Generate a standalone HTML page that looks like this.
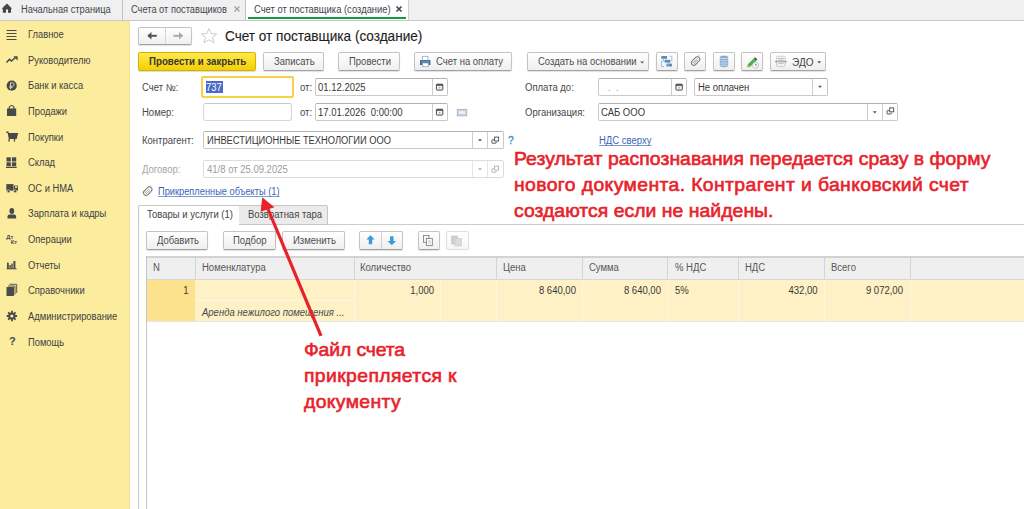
<!DOCTYPE html>
<html><head><meta charset="utf-8">
<style>
*{box-sizing:border-box;margin:0;padding:0}
html,body{width:1024px;height:509px;overflow:hidden;background:#fff}
body{position:relative;font-family:"Liberation Sans",sans-serif;color:#4d4d4d;font-size:10px}
.a{position:absolute}
.t{position:absolute;white-space:nowrap}
.btn{position:absolute;border:1px solid #c4c4c4;border-bottom-color:#a2a2a2;border-radius:2px;background:linear-gradient(#ffffff,#efefef);box-shadow:0 1px 1px rgba(0,0,0,.12)}
.inp{position:absolute;border:1px solid #c8c8c8;border-top-color:#b0b0b0;border-radius:2px;background:#fff}
.ico{position:absolute;overflow:visible}
.red{position:absolute;white-space:nowrap;color:#e8222b;font-weight:normal;font-size:18px;-webkit-text-stroke:0.6px #e8222b}
.lnk{color:#3d64b8;text-decoration:underline;text-decoration-color:#7d9bd6;text-decoration-skip-ink:none}
</style></head><body>
<div class="a" style="left:0px;top:0px;width:1024px;height:20px;background:#f0f0f0;"></div>
<div class="a" style="left:0px;top:20px;width:1024px;height:1px;background:#c8c8ce;"></div>
<svg class="ico" style="left:0;top:0" width="14" height="14" viewBox="0 0 14 14"><path d="M6.9 3.6 L1.6 8.7 L2.8 8.7 L2.8 12.8 L6 12.8 L6 9.4 L8 9.4 L8 12.8 L11 12.8 L11 8.7 L12.2 8.7 Z" fill="#454545"/></svg>
<div class="t" style="left:20.80px;top:4.73px;font-size:10.0px;line-height:10.0px;transform-origin:0 0;transform:scaleX(0.9262499999999999);color:#45454f;">Начальная страница</div>
<div class="a" style="left:122px;top:0px;width:1px;height:20px;background:#c2c2c2;"></div>
<div class="t" style="left:131.00px;top:4.73px;font-size:10.0px;line-height:10.0px;transform-origin:0 0;transform:scaleX(0.9262499999999999);color:#45454f;">Счета от поставщиков</div>
<svg class="ico" style="left:233px;top:5px" width="8" height="8" viewBox="0 0 8 8"><path d="M1.5 1.5 L6.5 6.5 M6.5 1.5 L1.5 6.5" stroke="#a0a0a0" stroke-width="1.2"/></svg>
<div class="a" style="left:245px;top:0px;width:1px;height:20px;background:#c2c2c2;"></div>
<div class="a" style="left:246px;top:0px;width:162px;height:20px;background:#ffffff;"></div>
<div class="a" style="left:248px;top:17px;width:158px;height:2px;background:#139a43;"></div>
<div class="t" style="left:253.50px;top:4.73px;font-size:10.0px;line-height:10.0px;transform-origin:0 0;transform:scaleX(0.9405);color:#45454f;">Счет от поставщика (создание)</div>
<svg class="ico" style="left:395px;top:5px" width="8" height="8" viewBox="0 0 8 8"><path d="M1.5 1.5 L6.5 6.5 M6.5 1.5 L1.5 6.5" stroke="#444" stroke-width="1.6"/></svg>
<div class="a" style="left:408px;top:0px;width:1px;height:20px;background:#cfcfcf;"></div>
<div class="a" style="left:0px;top:21px;width:130px;height:488px;background:#fbec9e;"></div>
<div class="a" style="left:129px;top:21px;width:1px;height:488px;background:#f3e394;"></div>
<div class="t" style="left:27.80px;top:30.14px;font-size:10.0px;line-height:10.0px;transform-origin:0 0;transform:scaleX(0.93575);color:#424242;">Главное</div>
<div class="t" style="left:27.80px;top:55.75px;font-size:10.0px;line-height:10.0px;transform-origin:0 0;transform:scaleX(0.93575);color:#424242;">Руководителю</div>
<div class="t" style="left:27.80px;top:81.38px;font-size:10.0px;line-height:10.0px;transform-origin:0 0;transform:scaleX(0.93575);color:#424242;">Банк и касса</div>
<div class="t" style="left:27.80px;top:106.99px;font-size:10.0px;line-height:10.0px;transform-origin:0 0;transform:scaleX(0.93575);color:#424242;">Продажи</div>
<div class="t" style="left:27.80px;top:132.62px;font-size:10.0px;line-height:10.0px;transform-origin:0 0;transform:scaleX(0.93575);color:#424242;">Покупки</div>
<div class="t" style="left:27.80px;top:158.23px;font-size:10.0px;line-height:10.0px;transform-origin:0 0;transform:scaleX(0.93575);color:#424242;">Склад</div>
<div class="t" style="left:27.80px;top:183.85px;font-size:10.0px;line-height:10.0px;transform-origin:0 0;transform:scaleX(0.93575);color:#424242;">ОС и НМА</div>
<div class="t" style="left:27.80px;top:209.47px;font-size:10.0px;line-height:10.0px;transform-origin:0 0;transform:scaleX(0.93575);color:#424242;">Зарплата и кадры</div>
<div class="t" style="left:27.80px;top:235.09px;font-size:10.0px;line-height:10.0px;transform-origin:0 0;transform:scaleX(0.93575);color:#424242;">Операции</div>
<div class="t" style="left:27.80px;top:260.72px;font-size:10.0px;line-height:10.0px;transform-origin:0 0;transform:scaleX(0.93575);color:#424242;">Отчеты</div>
<div class="t" style="left:27.80px;top:286.34px;font-size:10.0px;line-height:10.0px;transform-origin:0 0;transform:scaleX(0.93575);color:#424242;">Справочники</div>
<div class="t" style="left:27.80px;top:311.96px;font-size:10.0px;line-height:10.0px;transform-origin:0 0;transform:scaleX(0.93575);color:#424242;">Администрирование</div>
<div class="t" style="left:27.80px;top:337.58px;font-size:10.0px;line-height:10.0px;transform-origin:0 0;transform:scaleX(0.93575);color:#424242;">Помощь</div>
<svg class="ico" style="left:0;top:0" width="130" height="509" fill="#4a4a4a"><rect x="6.5" y="30" width="10" height="1" /><rect x="6.5" y="33" width="10" height="1"/><rect x="6.5" y="36" width="10" height="1"/><rect x="6.5" y="39" width="10" height="1"/><path d="M6.5 62.5 L9.5 59.3 L11.5 61 L15.5 57.5" fill="none" stroke-width="1.6" stroke="#4a4a4a"/><path d="M13.3 56.3 L17.6 56.3 L17.6 60.6 Z"/><circle cx="11.7" cy="85.7" r="5.1"/><path d="M10.5 89.2 L10.5 82.8 L12.4 82.8 Q14.1 82.8 14.1 84.5 Q14.1 86.2 12.4 86.2 L9.4 86.2 M9.4 87.6 L12.6 87.6" fill="none" stroke="#d8d0a8" stroke-width="1"/><path d="M7 108.5 L16.2 108.5 L16.2 116 L7 116 Z"/><path d="M9.3 109 L9.3 107 Q11.6 104 13.9 107 L13.9 109" fill="none" stroke="#4a4a4a" stroke-width="1.2"/><path d="M6 132 L8 132 L9.3 138.4 L16.2 138.4 L17.5 133.6 L8.6 133.6" fill="#4a4a4a" stroke="#4a4a4a" stroke-width="1.1"/><rect x="8.4" y="139" width="1.3" height="2.6"/><rect x="13.8" y="139" width="1.3" height="2.6"/><rect x="6.5" y="157.3" width="4.3" height="4.2"/><rect x="11.9" y="157.3" width="4.3" height="4.2"/><rect x="6.5" y="162.3" width="4.3" height="3.8"/><rect x="11.9" y="162.3" width="4.3" height="3.8"/><rect x="6" y="166.7" width="10.7" height="1.3"/><rect x="6.3" y="184.1" width="7.2" height="6.6"/><rect x="13.9" y="185.6" width="4.1" height="5.1"/><rect x="15" y="186.3" width="2.2" height="1.6" fill="#fbec9e"/><circle cx="8.5" cy="191.2" r="1.5" stroke="#fbec9e" stroke-width="0.6"/><circle cx="15.2" cy="191.2" r="1.5" stroke="#fbec9e" stroke-width="0.6"/><ellipse cx="11.8" cy="211" rx="2.4" ry="2.9"/><path d="M7.5 218.6 L7.5 216.6 Q7.5 214.6 9.5 214.6 L14.1 214.6 Q16.1 214.6 16.1 216.6 L16.1 218.6 Z"/><text x="6.3" y="238.8" font-size="5.8" font-family="Liberation Sans" font-weight="bold">Дт</text><text x="10.8" y="244.2" font-size="5.8" font-family="Liberation Sans" font-weight="bold">Кт</text><rect x="7" y="262.6" width="1.8" height="6.2"/><rect x="9.4" y="265" width="1.4" height="3.8"/><rect x="11.3" y="263.5" width="1.4" height="5.3"/><rect x="13.4" y="261" width="2" height="7.8"/><rect x="6.6" y="268.3" width="10" height="1"/><rect x="6.5" y="287" width="7.5" height="9" /><path d="M8 286 L15 286 L15 294.5" fill="none" stroke="#4a4a4a" stroke-width="0.9"/><path d="M9.5 284.3 L16.7 284.3 L16.7 293" fill="none" stroke="#4a4a4a" stroke-width="0.9"/><g transform="translate(11.85 316)"><circle r="3.6"/><g stroke="#4a4a4a" stroke-width="1.8"><path d="M0 -5.2 L0 5.2 M-5.2 0 L5.2 0 M-3.7 -3.7 L3.7 3.7 M3.7 -3.7 L-3.7 3.7"/></g><circle r="1.6" fill="#fbec9e"/></g><text x="9" y="345.2" font-size="11" font-family="Liberation Sans" font-weight="bold">?</text></svg>
<div class="btn" style="left:138px;top:27px;width:54px;height:18px;"></div>
<div class="a" style="left:165px;top:28px;width:1px;height:16px;background:#d6d6d6;"></div>
<svg class="ico" style="left:0;top:0" width="240" height="60"><path d="M148.2 35.8 L156.8 35.8" stroke="#555" stroke-width="2"/><path d="M147.3 35.8 L151.5 32 L151.5 39.6 Z" fill="#555"/><path d="M173.5 35.8 L182.2 35.8" stroke="#aaa" stroke-width="2"/><path d="M183.2 35.8 L179 32 L179 39.6 Z" fill="#aaa"/><path d="M209 28.6 L211.2 33.6 L216.6 34 L212.5 37.4 L213.9 42.7 L209 39.8 L204.1 42.7 L205.5 37.4 L201.4 34 L206.8 33.6 Z" fill="none" stroke="#c5ccd3" stroke-width="1"/></svg>
<div class="t" style="left:224.80px;top:27.90px;font-size:15px;line-height:15px;transform-origin:0 0;transform:scaleX(0.905);color:#1e1e1e;-webkit-text-stroke:0.15px #1e1e1e">Счет от поставщика (создание)</div>
<div class="a" style="left:138px;top:52px;width:118px;height:19px;border:1px solid #d2b200;border-radius:2px;background:linear-gradient(#ffe94d,#f4d000);box-shadow:0 1px 1px rgba(0,0,0,.15)"></div>
<div class="t" style="left:148.50px;top:57.33px;font-size:10.0px;line-height:10.0px;transform-origin:0 0;transform:scaleX(0.969);color:#363636;font-weight:bold">Провести и закрыть</div>
<div class="btn" style="left:263px;top:52px;width:61px;height:19px;"></div>
<div class="t" style="left:273.50px;top:57.33px;font-size:10.0px;line-height:10.0px;transform-origin:0 0;transform:scaleX(0.95);">Записать</div>
<div class="btn" style="left:338px;top:52px;width:62px;height:19px;"></div>
<div class="t" style="left:348.50px;top:57.33px;font-size:10.0px;line-height:10.0px;transform-origin:0 0;transform:scaleX(0.95);">Провести</div>
<div class="btn" style="left:414px;top:52px;width:98px;height:19px;"></div>
<div class="t" style="left:436.40px;top:57.33px;font-size:10.0px;line-height:10.0px;transform-origin:0 0;transform:scaleX(0.95);">Счет на оплату</div>
<div class="btn" style="left:527px;top:52px;width:122px;height:19px;"></div>
<div class="t" style="left:537.50px;top:57.33px;font-size:10.0px;line-height:10.0px;transform-origin:0 0;transform:scaleX(0.95);">Создать на основании</div>
<div class="btn" style="left:656px;top:52px;width:22px;height:19px;"></div>
<div class="btn" style="left:684px;top:52px;width:22px;height:19px;"></div>
<div class="btn" style="left:713px;top:52px;width:22px;height:19px;"></div>
<div class="btn" style="left:741px;top:52px;width:22px;height:19px;"></div>
<div class="btn" style="left:770px;top:52px;width:56px;height:19px;"></div>
<div class="t" style="left:792.40px;top:56.63px;font-size:10.6px;line-height:10.6px;transform-origin:0 0;transform:scaleX(0.95);color:#474747;">ЭДО</div>
<svg class="ico" style="left:0;top:0" width="840" height="80"><rect x="422.3" y="56.3" width="5.6" height="4.2" fill="#fff" stroke="#9aa8b8" stroke-width="0.8"/><rect x="420" y="60" width="10.4" height="5" fill="#3f6a9a"/><rect x="421" y="60.8" width="8.4" height="1" fill="#6f93bd"/><rect x="422.4" y="63" width="5.9" height="3.7" fill="#fff" stroke="#9aa8b8" stroke-width="0.8"/><path d="M640.2 61.4 L644.2 61.4 L642.2 63.4 Z" fill="#555"/><g fill="#5b8ebf"><rect x="661.3" y="56" width="5.8" height="2.8"/><rect x="664.6" y="59.8" width="5.8" height="2.8"/><rect x="666.5" y="63.6" width="5.5" height="2.9"/></g><g fill="none" stroke="#8fb2d4" stroke-width="0.8"><path d="M663 61 L661.5 61 L661.5 66.5 L664 66.5"/><path d="M669.5 56.2 L671.8 56.2 L671.8 61.5"/><path d="M663.5 58.8 L663.5 61.2 L664.6 61.2"/><path d="M668.5 62.6 L668.5 65 L666.5 65"/></g><g transform="translate(695.6 61) rotate(-45)"><rect x="-5" y="-2.5" width="10" height="5" rx="2.5" fill="none" stroke="#777" stroke-width="1.05"/><path d="M-3.4 -0.6 L2.8 -0.6 M-3.4 0.8 L2.6 0.8" stroke="#8c8c8c" stroke-width="0.8"/><path d="M4.8 -1.6 L6.2 -1.6" stroke="#777" stroke-width="0.8"/></g><rect x="720.1" y="56" width="7.7" height="10.7" rx="1.8" fill="#89acd0" stroke="#7a9cc0" stroke-width="0.5"/><g stroke="#e6eef7" stroke-width="0.7"><path d="M720.5 58.5 L727.4 58.5 M720.5 60.8 L727.4 60.8 M720.5 63.1 L727.4 63.1 M720.5 65.2 L727.4 65.2"/></g><path d="M747.6 64.6 L753.8 58.4 L756.2 60.8 L750 67 Z" fill="#4caf50"/><path d="M753.8 58.4 L755 57.2 L757.4 59.6 L756.2 60.8 Z" fill="#444c55"/><path d="M747.6 64.6 L747 67.6 L750 67 Z" fill="#d99a3a"/><circle cx="755.6" cy="65.2" r="2.9" fill="#fff" stroke="#a9bfd3" stroke-width="0.9"/><path d="M755.6 63.8 L755.6 65.2 L756.8 65.2" stroke="#445" stroke-width="0.7" fill="none"/><rect x="776.5" y="56.2" width="8.6" height="10.4" rx="1.5" fill="#f2f2f2" stroke="#c9c9c9" stroke-width="0.9"/><g stroke="#a9a9a9" stroke-width="0.8"><path d="M778 58.6 L783.8 58.6 M778 60.4 L783.8 60.4 M778 63.2 L783.8 63.2"/></g><path d="M775 61.6 L786.6 61.6" stroke="#9a9a9a" stroke-width="0.8"/><path d="M775 61.6 L776.5 60.5 L776.5 62.7Z M786.6 61.6 L785.1 60.5 L785.1 62.7Z" fill="#8a8a8a"/><path d="M817.2 61.3 L821.2 61.3 L819.2 63.4 Z" fill="#555"/></svg>
<div class="t" style="left:142.20px;top:83.13px;font-size:10.0px;line-height:10.0px;transform-origin:0 0;transform:scaleX(0.95);color:#474747;">Счет №:</div>
<div class="t" style="left:142.20px;top:107.73px;font-size:10.0px;line-height:10.0px;transform-origin:0 0;transform:scaleX(0.95);color:#474747;">Номер:</div>
<div class="t" style="left:142.20px;top:136.33px;font-size:10.0px;line-height:10.0px;transform-origin:0 0;transform:scaleX(0.95);color:#474747;">Контрагент:</div>
<div class="t" style="left:142.20px;top:164.94px;font-size:10.0px;line-height:10.0px;transform-origin:0 0;transform:scaleX(0.95);color:#a6a6a6;">Договор:</div>
<div class="a" style="left:201px;top:76px;width:93px;height:22px;border:2px solid #f9cf45;border-radius:2px;background:#fff"></div>
<div class="a" style="left:206px;top:81px;width:17px;height:12px;background:#4a6cc6;"></div>
<div class="t" style="left:206.30px;top:83.13px;font-size:10.0px;line-height:10.0px;transform-origin:0 0;transform:scaleX(0.95);color:#ffffff;">737</div>
<div class="inp" style="left:203px;top:103px;width:89px;height:18px;border-color:#d6d6d6;border-top-color:#c8c8c8;border-radius:3px"></div>
<div class="t" style="left:299.80px;top:83.13px;font-size:10.0px;line-height:10.0px;transform-origin:0 0;transform:scaleX(0.95);color:#474747;">от:</div>
<div class="t" style="left:299.80px;top:107.73px;font-size:10.0px;line-height:10.0px;transform-origin:0 0;transform:scaleX(0.95);color:#474747;">от:</div>
<div class="inp" style="left:315px;top:78px;width:133px;height:18px;"></div>
<div class="a" style="left:432px;top:79px;width:1px;height:16px;background:#cdcdcd;"></div>
<div class="t" style="left:317.80px;top:83.13px;font-size:10.0px;line-height:10.0px;transform-origin:0 0;transform:scaleX(0.95);color:#383838;">01.12.2025</div>
<div class="inp" style="left:315px;top:103px;width:133px;height:18px;"></div>
<div class="a" style="left:432px;top:104px;width:1px;height:16px;background:#cdcdcd;"></div>
<div class="t" style="left:317.80px;top:107.73px;font-size:10.0px;line-height:10.0px;transform-origin:0 0;transform:scaleX(0.95);color:#383838;">17.01.2026&nbsp;&nbsp;0:00:00</div>
<div class="t" style="left:525.00px;top:83.13px;font-size:10.0px;line-height:10.0px;transform-origin:0 0;transform:scaleX(0.95);color:#474747;">Оплата до:</div>
<div class="t" style="left:525.00px;top:107.73px;font-size:10.0px;line-height:10.0px;transform-origin:0 0;transform:scaleX(0.95);color:#474747;">Организация:</div>
<div class="inp" style="left:598px;top:78px;width:89px;height:18px;"></div>
<div class="a" style="left:671px;top:79px;width:1px;height:16px;background:#cdcdcd;"></div>
<div class="t" style="left:607.50px;top:83.13px;font-size:10.0px;line-height:10.0px;transform-origin:0 0;transform:scaleX(0.95);color:#8aa0c8;">.&nbsp;&nbsp;.</div>
<div class="inp" style="left:694px;top:78px;width:134px;height:18px;"></div>
<div class="a" style="left:812px;top:79px;width:1px;height:16px;background:#cdcdcd;"></div>
<div class="t" style="left:697.50px;top:83.13px;font-size:10.0px;line-height:10.0px;transform-origin:0 0;transform:scaleX(0.95);color:#383838;">Не оплачен</div>
<div class="inp" style="left:598px;top:103px;width:300px;height:18px;"></div>
<div class="a" style="left:867px;top:104px;width:1px;height:16px;background:#cdcdcd;"></div>
<div class="a" style="left:882px;top:104px;width:1px;height:16px;background:#cdcdcd;"></div>
<div class="t" style="left:601.00px;top:107.73px;font-size:10.0px;line-height:10.0px;transform-origin:0 0;transform:scaleX(0.95);color:#383838;">САБ ООО</div>
<div class="inp" style="left:203px;top:131px;width:301px;height:18px;"></div>
<div class="a" style="left:472px;top:132px;width:1px;height:16px;background:#cdcdcd;"></div>
<div class="a" style="left:487px;top:132px;width:1px;height:16px;background:#cdcdcd;"></div>
<div class="t" style="left:206.60px;top:136.33px;font-size:10.0px;line-height:10.0px;transform-origin:0 0;transform:scaleX(0.9309999999999999);color:#383838;">ИНВЕСТИЦИОННЫЕ ТЕХНОЛОГИИ ООО</div>
<div class="t" style="left:507.80px;top:135.46px;font-size:10.8px;line-height:10.8px;transform-origin:0 0;transform:scaleX(0.95);color:#3d8fd0;-webkit-text-stroke:0.35px #3d8fd0">?</div>
<div class="t lnk" style="left:599.40px;top:136.33px;font-size:10.0px;line-height:10.0px;transform-origin:0 0;transform:scaleX(0.95);">НДС сверху</div>
<div class="inp" style="left:203px;top:160px;width:301px;height:18px;border-color:#dcdcdc"></div>
<div class="a" style="left:472px;top:161px;width:1px;height:16px;background:#e4e4e4;"></div>
<div class="a" style="left:487px;top:161px;width:1px;height:16px;background:#e4e4e4;"></div>
<div class="t" style="left:206.60px;top:164.94px;font-size:10.0px;line-height:10.0px;transform-origin:0 0;transform:scaleX(0.95);color:#9c9c9c;">41/8 от 25.09.2025</div>
<div class="t lnk" style="left:157.50px;top:187.44px;font-size:10.0px;line-height:10.0px;transform-origin:0 0;transform:scaleX(0.9262499999999999);">Прикрепленные объекты (1)</div>
<svg class="ico" style="left:0;top:0" width="1024" height="509"><rect x="436.4" y="84.19999999999999" width="6.4" height="5.9" rx="0.6" fill="#f0f0f0" stroke="#4d4d4d" stroke-width="1"/><rect x="436.4" y="84.19999999999999" width="6.4" height="1.6" fill="#4d4d4d"/><rect x="438.9" y="87.19999999999999" width="1.4" height="1.2" fill="#9a9a9a"/><rect x="436.4" y="109.19999999999999" width="6.4" height="5.9" rx="0.6" fill="#f0f0f0" stroke="#4d4d4d" stroke-width="1"/><rect x="436.4" y="109.19999999999999" width="6.4" height="1.6" fill="#4d4d4d"/><rect x="438.9" y="112.19999999999999" width="1.4" height="1.2" fill="#9a9a9a"/><rect x="675.9" y="84.19999999999999" width="6.4" height="5.9" rx="0.6" fill="#f0f0f0" stroke="#4d4d4d" stroke-width="1"/><rect x="675.9" y="84.19999999999999" width="6.4" height="1.6" fill="#4d4d4d"/><rect x="678.4" y="87.19999999999999" width="1.4" height="1.2" fill="#9a9a9a"/><path d="M818 85.8 L822 85.8 L820 88.0 Z" fill="#555"/><path d="M872.8 111.2 L876.8 111.2 L874.8 113.4 Z" fill="#555"/><path d="M478 139.2 L482 139.2 L480 141.39999999999998 Z" fill="#555"/><path d="M478 168.2 L482 168.2 L480 170.39999999999998 Z" fill="#b0b0b0"/><path d="M889.1 110.6 L887.4000000000001 110.6 Q887.0000000000001 110.6 887.0000000000001 111.0 L887.0000000000001 113.6 Q887.0000000000001 114.0 887.4000000000001 114.0 L890.9000000000001 114.0 Q891.3000000000001 114.0 891.3000000000001 113.6 L891.3000000000001 112.6" fill="none" stroke="#4f4f4f" stroke-width="0.95"/><rect x="889.7" y="107.9" width="4" height="3.9" fill="#fff" stroke="#4f4f4f" stroke-width="0.95"/><path d="M494.0 139.79999999999998 L492.3 139.79999999999998 Q491.9 139.79999999999998 491.9 140.2 L491.9 142.79999999999998 Q491.9 143.2 492.3 143.2 L495.8 143.2 Q496.2 143.2 496.2 142.79999999999998 L496.2 141.79999999999998" fill="none" stroke="#4f4f4f" stroke-width="0.95"/><rect x="494.59999999999997" y="137.1" width="4" height="3.9" fill="#fff" stroke="#4f4f4f" stroke-width="0.95"/><path d="M494.0 168.79999999999998 L492.3 168.79999999999998 Q491.9 168.79999999999998 491.9 169.2 L491.9 171.79999999999998 Q491.9 172.2 492.3 172.2 L495.8 172.2 Q496.2 172.2 496.2 171.79999999999998 L496.2 170.79999999999998" fill="none" stroke="#b5b5b5" stroke-width="0.95"/><rect x="494.59999999999997" y="166.1" width="4" height="3.9" fill="#fff" stroke="#b5b5b5" stroke-width="0.95"/><rect x="457.3" y="109.4" width="9.4" height="6.4" fill="#cdd8e3" stroke="#9fb3c7" stroke-width="0.9"/><rect x="459" y="111.3" width="6" height="2.4" fill="#eef2f6"/><g transform="translate(147.7 191.2) rotate(-45)"><rect x="-4.9" y="-2.6" width="9.8" height="5.2" rx="2.6" fill="none" stroke="#858585" stroke-width="1.1"/><path d="M-3.4 -0.6 L2.6 -0.6 M-3.4 0.9 L2.4 0.9" stroke="#9a9a9a" stroke-width="0.8"/><path d="M4.6 -1.8 L6 -1.8" stroke="#858585" stroke-width="0.8"/></g></svg>
<div class="a" style="left:138px;top:224px;width:1px;height:285px;background:#c8c8c8;"></div>
<div class="a" style="left:327px;top:224px;width:697px;height:1px;background:#cccccc;"></div>
<div class="a" style="left:138px;top:205px;width:102px;height:20px;border:1px solid #c6c6c6;border-bottom:none;border-radius:2px 2px 0 0;background:#fff"></div>
<div class="a" style="left:239px;top:205px;width:89px;height:20px;border:1px solid #c6c6c6;border-left:none;border-radius:0 2px 0 0;background:#ebebeb"></div>
<div class="t" style="left:146.50px;top:209.73px;font-size:10.0px;line-height:10.0px;transform-origin:0 0;transform:scaleX(0.95);color:#454545;">Товары и услуги (1)</div>
<div class="t" style="left:248.00px;top:209.94px;font-size:10.0px;line-height:10.0px;transform-origin:0 0;transform:scaleX(0.95);color:#454545;">Возвратная тара</div>
<div class="btn" style="left:146px;top:231px;width:62px;height:19px;"></div>
<div class="t" style="left:157.00px;top:235.94px;font-size:10.0px;line-height:10.0px;transform-origin:0 0;transform:scaleX(0.95);">Добавить</div>
<div class="btn" style="left:223px;top:231px;width:53px;height:19px;"></div>
<div class="t" style="left:232.50px;top:235.94px;font-size:10.0px;line-height:10.0px;transform-origin:0 0;transform:scaleX(0.95);">Подбор</div>
<div class="btn" style="left:282px;top:231px;width:63px;height:19px;"></div>
<div class="t" style="left:293.00px;top:235.94px;font-size:10.0px;line-height:10.0px;transform-origin:0 0;transform:scaleX(0.95);">Изменить</div>
<div class="btn" style="left:359px;top:231px;width:44px;height:19px;"></div>
<div class="a" style="left:381px;top:232px;width:1px;height:17px;background:#d0d0d0;"></div>
<div class="btn" style="left:418px;top:231px;width:22px;height:19px;"></div>
<div class="btn" style="left:446px;top:231px;width:23px;height:19px;border-color:#dedede;box-shadow:none;background:linear-gradient(#fff,#f6f6f6)"></div>
<svg class="ico" style="left:0;top:0" width="1024" height="509"><path d="M370.5 235.3 L366.3 239.6 L368.8 239.6 L368.8 244.3 L372.2 244.3 L372.2 239.6 L374.7 239.6 Z" fill="#3a9ad9"/><path d="M391.8 245.3 L387.6 241 L390.1 241 L390.1 236.3 L393.5 236.3 L393.5 241 L396 241 Z" fill="#3a9ad9"/><rect x="423.5" y="235.5" width="5.5" height="6.8" fill="#f4f6f8" stroke="#6c7a88" stroke-width="0.8"/><rect x="426.5" y="238.5" width="5.8" height="7" fill="#fff" stroke="#6c7a88" stroke-width="0.8"/><path d="M428 241 L431 241 M428 243 L431 243" stroke="#8a96a2" stroke-width="0.6"/><rect x="451.5" y="236" width="6" height="8" fill="#cfcfcf" stroke="#c0c0c0" stroke-width="0.6"/><rect x="455" y="238.5" width="6.5" height="7.5" fill="#dcdcdc" stroke="#c8c8c8" stroke-width="0.6"/></svg>
<div class="a" style="left:146px;top:256px;width:1px;height:253px;background:#c6c6c6;"></div>
<div class="a" style="left:147px;top:256px;width:877px;height:2px;background:#d2d2d2;"></div>
<div class="a" style="left:147px;top:258px;width:877px;height:21px;background:#efefef;"></div>
<div class="a" style="left:147px;top:279px;width:877px;height:1px;background:#d8d8d8;"></div>
<div class="a" style="left:195px;top:258px;width:1px;height:21px;background:#d4d4d4;"></div>
<div class="a" style="left:354px;top:258px;width:1px;height:21px;background:#d4d4d4;"></div>
<div class="a" style="left:496px;top:258px;width:1px;height:21px;background:#d4d4d4;"></div>
<div class="a" style="left:582px;top:258px;width:1px;height:21px;background:#d4d4d4;"></div>
<div class="a" style="left:667px;top:258px;width:1px;height:21px;background:#d4d4d4;"></div>
<div class="a" style="left:738px;top:258px;width:1px;height:21px;background:#d4d4d4;"></div>
<div class="a" style="left:824px;top:258px;width:1px;height:21px;background:#d4d4d4;"></div>
<div class="a" style="left:910px;top:258px;width:1px;height:21px;background:#d4d4d4;"></div>
<div class="t" style="left:153.00px;top:262.94px;font-size:10.0px;line-height:10.0px;transform-origin:0 0;transform:scaleX(0.95);color:#575757;">N</div>
<div class="t" style="left:201.50px;top:262.94px;font-size:10.0px;line-height:10.0px;transform-origin:0 0;transform:scaleX(0.95);color:#575757;">Номенклатура</div>
<div class="t" style="left:360.30px;top:262.94px;font-size:10.0px;line-height:10.0px;transform-origin:0 0;transform:scaleX(0.95);color:#575757;">Количество</div>
<div class="t" style="left:502.70px;top:262.94px;font-size:10.0px;line-height:10.0px;transform-origin:0 0;transform:scaleX(0.95);color:#575757;">Цена</div>
<div class="t" style="left:588.90px;top:262.94px;font-size:10.0px;line-height:10.0px;transform-origin:0 0;transform:scaleX(0.95);color:#575757;">Сумма</div>
<div class="t" style="left:674.50px;top:262.94px;font-size:10.0px;line-height:10.0px;transform-origin:0 0;transform:scaleX(0.95);color:#575757;">% НДС</div>
<div class="t" style="left:745.20px;top:262.94px;font-size:10.0px;line-height:10.0px;transform-origin:0 0;transform:scaleX(0.95);color:#575757;">НДС</div>
<div class="t" style="left:831.00px;top:262.94px;font-size:10.0px;line-height:10.0px;transform-origin:0 0;transform:scaleX(0.95);color:#575757;">Всего</div>
<div class="a" style="left:147px;top:280px;width:877px;height:41px;background:#fdf1c5;"></div>
<div class="a" style="left:147px;top:280px;width:48px;height:41px;background:#fce28d;"></div>
<div class="a" style="left:354px;top:280px;width:1px;height:41px;background:#fff8e0;"></div>
<div class="a" style="left:496px;top:280px;width:1px;height:41px;background:#fff8e0;"></div>
<div class="a" style="left:582px;top:280px;width:1px;height:41px;background:#fff8e0;"></div>
<div class="a" style="left:667px;top:280px;width:1px;height:41px;background:#fff8e0;"></div>
<div class="a" style="left:738px;top:280px;width:1px;height:41px;background:#fff8e0;"></div>
<div class="a" style="left:824px;top:280px;width:1px;height:41px;background:#fff8e0;"></div>
<div class="a" style="left:910px;top:280px;width:1px;height:41px;background:#fff8e0;"></div>
<div class="a" style="left:440px;top:280px;width:1px;height:41px;background:#fff8e0;"></div>
<div class="a" style="left:195px;top:300px;width:159px;height:1px;background:#fff8e0;"></div>
<div class="a" style="left:147px;top:321px;width:877px;height:1px;background:#e6e6e6;"></div>
<div class="t" style="right:835.00px;top:285.74px;font-size:10.0px;line-height:10.0px;transform-origin:100% 0;transform:scaleX(0.95);color:#3a3a3a;">1</div>
<div class="t" style="right:590.20px;top:285.74px;font-size:10.0px;line-height:10.0px;transform-origin:100% 0;transform:scaleX(0.95);color:#3a3a3a;">1,000</div>
<div class="t" style="right:448.20px;top:285.74px;font-size:10.0px;line-height:10.0px;transform-origin:100% 0;transform:scaleX(0.95);color:#3a3a3a;">8 640,00</div>
<div class="t" style="right:363.00px;top:285.74px;font-size:10.0px;line-height:10.0px;transform-origin:100% 0;transform:scaleX(0.95);color:#3a3a3a;">8 640,00</div>
<div class="t" style="left:674.50px;top:285.74px;font-size:10.0px;line-height:10.0px;transform-origin:0 0;transform:scaleX(0.95);color:#3a3a3a;">5%</div>
<div class="t" style="right:206.10px;top:285.74px;font-size:10.0px;line-height:10.0px;transform-origin:100% 0;transform:scaleX(0.95);color:#3a3a3a;">432,00</div>
<div class="t" style="right:120.60px;top:285.74px;font-size:10.0px;line-height:10.0px;transform-origin:100% 0;transform:scaleX(0.95);color:#3a3a3a;">9 072,00</div>
<div class="t" style="left:202.40px;top:307.74px;font-size:10.0px;line-height:10.0px;transform-origin:0 0;transform:scaleX(0.95);color:#4a4a4a;font-style:italic">Аренда нежилого помещения ...</div>
<div class="red" style="left:513.8px;top:150.24px;font-size:18.5px;line-height:18.5px;letter-spacing:0.063px;transform:scaleX(1.045);transform-origin:0 0">Результат распознавания передается сразу в форму</div>
<div class="red" style="left:513.8px;top:176.34px;font-size:18.5px;line-height:18.5px;letter-spacing:0.383px;transform:scaleX(1.045);transform-origin:0 0">нового документа. Контрагент и банковский счет</div>
<div class="red" style="left:513.8px;top:201.74px;font-size:18.5px;line-height:18.5px;letter-spacing:0.056px;transform:scaleX(1.045);transform-origin:0 0">создаются если не найдены.</div>
<div class="red" style="left:304.2px;top:340.94px;font-size:18.5px;line-height:18.5px;letter-spacing:-0.089px;transform:scaleX(1.045);transform-origin:0 0">Файл счета</div>
<div class="red" style="left:304.2px;top:366.94px;font-size:18.5px;line-height:18.5px;letter-spacing:0.387px;transform:scaleX(1.045);transform-origin:0 0">прикрепляется к</div>
<div class="red" style="left:304.2px;top:393.34px;font-size:18.5px;line-height:18.5px;letter-spacing:0.356px;transform:scaleX(1.045);transform-origin:0 0">документу</div>
<svg class="ico" style="left:0;top:0" width="1024" height="509"><path d="M321 335.8 L268 209" stroke="#e8222b" stroke-width="3.2" stroke-linecap="butt"/><path d="M262.2 197.3 L260.6 211.8 L274.4 207.2 Z" fill="#e8222b"/></svg>
</body></html>
